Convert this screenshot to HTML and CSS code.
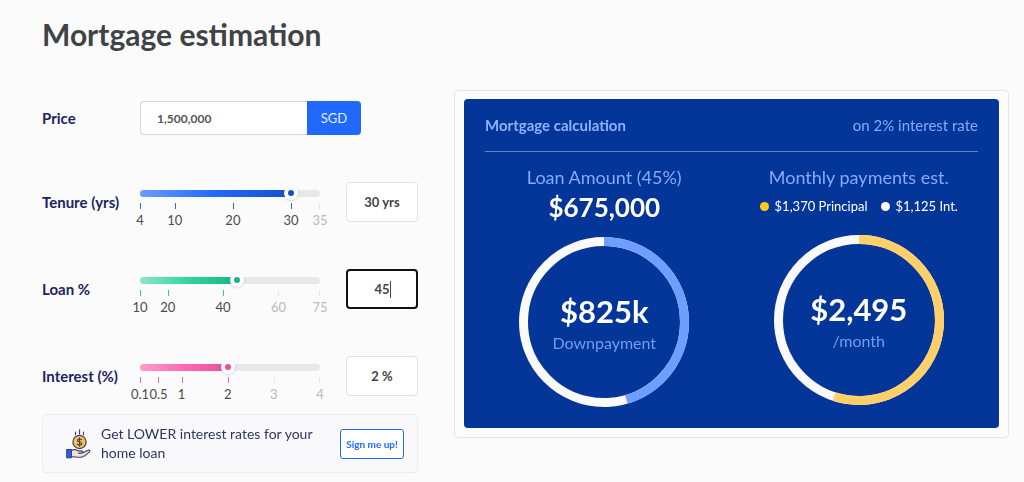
FILE: index.html
```
<!DOCTYPE html>
<html lang="en">
<head>
  <meta charset="UTF-8">
  <meta name="viewport" content="width=device-width, initial-scale=1.0">
  <title>Mortgage estimation</title>
  <link rel="stylesheet" href="styles.css">
</head>
<body>
  <main class="page">
    <h1>Mortgage estimation</h1>

    <div class="columns">
      <form class="form">
        <div class="row price-row">
          <label for="price">Price</label>
          <div class="price">
            <input type="text" id="price" value="1,500,000">
            <button type="button">SGD</button>
          </div>
        </div>

        <div class="row blue">
          <label for="tenure">Tenure (yrs)</label>
          <div class="slider">
            <div class="rail"><div class="fill" style="width: 83.9%"></div></div>
            <input type="range" id="tenure" min="4" max="35" value="30">
            <ol class="ticks">
              <li style="flex-grow: 6"><span>4</span></li>
              <li style="flex-grow: 10"><span>10</span></li>
              <li style="flex-grow: 10"><span>20</span></li>
              <li style="flex-grow: 5"><span>30</span></li>
              <li class="off last"><span>35</span></li>
            </ol>
          </div>
          <input type="text" class="value" id="tenureValue" aria-label="Tenure in years" value="30 yrs">
        </div>

        <div class="row green">
          <label for="loan">Loan %</label>
          <div class="slider">
            <div class="rail"><div class="fill" style="width: 53.8%"></div></div>
            <input type="range" id="loan" min="10" max="75" value="45">
            <ol class="ticks">
              <li style="flex-grow: 10"><span>10</span></li>
              <li style="flex-grow: 20"><span>20</span></li>
              <li style="flex-grow: 20"><span>40</span></li>
              <li class="off" style="flex-grow: 15"><span>60</span></li>
              <li class="off last"><span>75</span></li>
            </ol>
          </div>
          <input type="text" class="value active" id="loanValue" aria-label="Loan percent" value="45">
        </div>

        <div class="row pink">
          <label for="interest">Interest (%)</label>
          <div class="slider">
            <div class="rail"><div class="fill" style="width: 48.7%"></div></div>
            <input type="range" id="interest" min="0.1" max="4" step="0.1" value="2">
            <ol class="ticks">
              <li style="flex-grow: 4"><span>0.1</span></li>
              <li style="flex-grow: 5"><span>0.5</span></li>
              <li style="flex-grow: 10"><span>1</span></li>
              <li style="flex-grow: 10"><span>2</span></li>
              <li class="off" style="flex-grow: 10"><span>3</span></li>
              <li class="off last"><span>4</span></li>
            </ol>
          </div>
          <input type="text" class="value" id="interestValue" aria-label="Interest percent" value="2 %">
        </div>

        <div class="promo">
          <svg class="promo-icon" viewBox="0 0 26 30" aria-hidden="true">
            <g fill="none" stroke="#3c4270" stroke-width="1.2" stroke-linecap="round">
              <path d="M13.500 .8v4.200M9.500 3v2.500M17.500 3v2.500"/>
            </g>
            <circle cx="13.500" cy="13" r="6.600" fill="#fcc24c" stroke="#3c4270" stroke-width="1.200"/>
            <path d="M15.600 10.700c-.6-.9-4.200-1.200-4.200.7 0 2.100 4.400 1.100 4.400 3.200 0 1.900-3.700 1.800-4.500.6M13.500 8.800v8.400" fill="none" stroke="#3c4270" stroke-width="1.200" stroke-linecap="round"/>
            <path d="M5 21.500c2.500-1.400 5-1 7 .4h3.500c1.700 0 1.700 2 0 2.200h-3 3.700l5.400-2.700c1.700-.7 3 .5 1.800 1.600-2.700 2.400-5.700 5.100-8.900 5.300-3.400.1-6-.6-9.500-.7z" fill="#fbdcd8" stroke="#3c4270" stroke-width="1.100" stroke-linejoin="round"/>
            <path d="M.7 20.500h4.600v8.300H.7z" fill="#1f63f5" stroke="#2a3a7a" stroke-width="1"/>
          </svg>
          <p>Get LOWER interest rates for your home loan</p>
          <button type="button">Sign me up!</button>
        </div>
      </form>

      <section class="card">
        <div class="panel">
          <header class="panel-head">
            <h2>Mortgage calculation</h2>
            <p>on 2% interest rate</p>
          </header>
          <div class="charts">
            <div class="chart">
              <h3>Loan Amount (45%)</h3>
              <p class="amount">$675,000</p>
              <div class="ring">
                <svg viewBox="0 0 170 170" aria-hidden="true">
                  <circle class="ring-base" cx="85" cy="85" r="80.5"/>
                  <circle class="ring-loan" cx="85" cy="85" r="80.5" pathLength="100" stroke-dasharray="45.5 54.5" transform="rotate(-90 85 85)"/>
                </svg>
                <div class="ring-text">
                  <strong>$825k</strong>
                  <span>Downpayment</span>
                </div>
              </div>
            </div>
            <div class="chart">
              <h3>Monthly payments est.</h3>
              <ul class="legend">
                <li class="principal">$1,370 Principal</li>
                <li>$1,125 Int.</li>
              </ul>
              <div class="ring">
                <svg viewBox="0 0 170 170" aria-hidden="true">
                  <circle class="ring-base" cx="85" cy="85" r="80.5"/>
                  <circle class="ring-principal" cx="85" cy="85" r="80.5" pathLength="100" stroke-dasharray="55 45" transform="rotate(-90 85 85)"/>
                </svg>
                <div class="ring-text">
                  <strong>$2,495</strong>
                  <span>/month</span>
                </div>
              </div>
            </div>
          </div>
        </div>
      </section>
    </div>
  </main>

  <script>
    const units = { tenure: " yrs", loan: "", interest: " %" };

    document.querySelectorAll(".slider input").forEach(slider => {
      slider.addEventListener("input", () => {
        const part = (slider.value - slider.min) / (slider.max - slider.min);
        slider.parentElement.querySelector(".fill").style.width = part * 100 + "%";
        document.getElementById(slider.id + "Value").value = slider.value + units[slider.id];
      });
    });

    const loanValue = document.getElementById("loanValue");
    loanValue.focus();
    loanValue.setSelectionRange(2, 2);
  </script>
</body>
</html>
```
FILE: styles.css
```
* { box-sizing: border-box; margin: 0; padding: 0; }
body {
  font-family: Lato, "Open Sans", sans-serif;
  font-size: 14px;
  background: #fbfbfb;
  color: #4a4a4a;
}
input, button { font-family: inherit; }
ol, ul { list-style: none; }
.page { padding: 14px 15px 9px 42px; }
h1 {
  font-size: 30px; line-height: 40px; font-weight: 700;
  color: #404346; margin-bottom: 36px;
}
.columns {
  display: grid; grid-template-columns: 376fr 555fr;
  gap: 36px; align-items: start;
}

/* form */
.form { padding-top: 11px; }
.row {
  display: grid; grid-template-columns: 98px 1fr 72px;
  align-items: start; margin-bottom: 39px;
}
.row label {
  font-size: 15px; line-height: 40px; font-weight: 700; color: #1d2460;
  white-space: nowrap;
}
.price-row { grid-template-columns: 98px 1fr; margin-bottom: 47px; }
.price-row label { line-height: 34px; }
.price { display: flex; width: 221px; height: 34px; }
.price input {
  flex: 1; min-width: 0; padding: 0 16px;
  border: 1px solid #d6d6d6; border-right: 0; border-radius: 4px 0 0 4px;
  background: #fff; color: #555; font-size: 12px; font-weight: 700;
}
.price button {
  width: 54px; border: 0; border-radius: 0 4px 4px 0;
  background: #1f69ff; color: #e3ecff; font-size: 13px;
}
.value {
  width: 72px; height: 40px; text-align: center;
  border: 1px solid #e2e2e2; border-radius: 4px; background: #fff;
  color: #444; font-size: 13px; font-weight: 700;
}
.value:focus { outline: none; }
/* steady caret right after the number */
.value.active {
  border: 2px solid #111; caret-color: transparent;
  background: linear-gradient(#444, #444) 42px center / 1px 17px no-repeat #fff;
}

/* sliders */
.blue { --light: #6c9cff; --mid: #1f69ff; --dark: #1550cc; }
.green { --light: #8ce5c9; --mid: #2fd5a0; --dark: #17b584; }
.pink { --light: #ff9dce; --mid: #ff69b4; --dark: #e84f9b; }
.slider {
  display: grid; grid-template-rows: 14px auto;
  align-items: center; margin-right: 26px; padding-top: 4px; height: 48px;
}
.rail, .slider input { grid-area: 1 / 1; }
.rail { height: 7px; border-radius: 4px; background: #e8e8e8; overflow: hidden; }
.fill {
  height: 100%;
  background: linear-gradient(to right, var(--light), var(--mid) 50%, var(--dark));
}
.slider input {
  appearance: none; background: transparent; cursor: pointer;
  height: 14px; margin: 0 -7px;
}
.slider input::-webkit-slider-thumb {
  appearance: none; width: 14px; height: 14px; border-radius: 50%;
  border: 4px solid #fff; background: var(--dark);
  box-shadow: 0 1px 3px rgba(0, 0, 0, 0.15);
}
.ticks { display: flex; align-self: start; padding-top: 3px; }
.ticks li { flex: 0 0 0; min-width: 0; }
.ticks li::before {
  content: ""; display: block; width: 1px; height: 6px; background: var(--mid);
}
.ticks li.off::before { background: #e8e8e8; }
.ticks li.last::before { margin-left: -1px; }
.ticks span {
  display: flex; justify-content: center; width: 0;
  font-size: 13px; line-height: 22px;
}
.ticks .off { color: #b9b9b9; }

/* promo */
.promo {
  display: flex; align-items: center; margin-top: -29px; height: 59px;
  padding: 0 13px 0 23px; border: 1px solid #ececee; border-radius: 4px;
  background: #f9f9fb;
}
.promo-icon { width: 26px; height: 30px; margin-right: 9px; }
.promo p {
  flex: 1; padding: 0 20px 2px 0;
  font-size: 14px; line-height: 19px; color: #2e3560;
}
.promo button {
  width: 64px; height: 30px; border: 1px solid #1f69ff; border-radius: 3px;
  background: #fff; color: #1f69ff; font-size: 10px; font-weight: 700;
  white-space: nowrap;
}

/* result card */
.card { padding: 8px 9px 9px; border: 1px solid #e6e6e6; border-radius: 4px; background: #fcfcfc; }
.panel { padding: 14px 21px 21px; border-radius: 4px; background: #043598; }
.panel-head {
  display: flex; justify-content: space-between;
  font-size: 15px; line-height: 24px; color: #8fb2ff;
  padding-bottom: 14px; border-bottom: 1px solid #6380c5;
}
.panel-head h2 { font-size: 15px; }
.panel-head p { color: #84abff; }
.charts {
  display: grid; grid-template-columns: 1fr 1fr;
  gap: 16px; padding-top: 13px; text-align: center;
}
.chart h3 { font-size: 18px; line-height: 24px; font-weight: 400; color: #84abff; }
.amount { font-size: 26px; line-height: 36px; font-weight: 700; color: #fff; }
.legend {
  display: flex; justify-content: center; gap: 13px;
  font-size: 13px; line-height: 34px; color: #fff; white-space: nowrap;
}
.legend li { display: flex; align-items: center; gap: 6px; }
.legend li::before {
  content: ""; width: 9px; height: 9px; border-radius: 50%; background: #fff;
}
.legend .principal::before { background: #ffcd17; }
.ring { display: grid; justify-items: center; align-items: center; margin-top: 12px; }
.ring svg { grid-area: 1 / 1; width: 170px; height: 170px; }
.ring circle { fill: none; stroke-width: 9; }
.ring-base { stroke: #fafafa; }
.ring-loan { stroke: #709eff; }
.ring-principal { stroke: #ffd068; }
.ring-text { grid-area: 1 / 1; display: flex; flex-direction: column; padding-top: 2px; }
.ring-text strong { font-size: 31px; line-height: 40px; color: #fff; }
.ring-text span { font-size: 16px; line-height: 24px; color: #719cf5; }
```
